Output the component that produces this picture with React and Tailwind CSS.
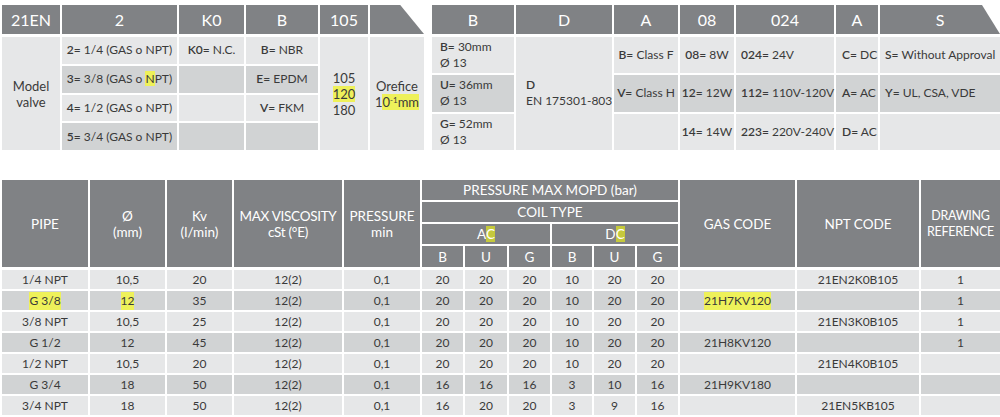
const font = { fontFamily: "Lato, 'Liberation Sans', sans-serif" };

const Hl = ({ children, dark }) => (
  <span className={dark ? "bg-[#c5c93c]" : "bg-[#eef15a]"}>{children}</span>
);

const head = "bg-[#808285] text-white flex items-center justify-center";
const light = "bg-[#e6e7e8]";
const dark = "bg-[#d1d3d4]";

// one cell = one flex box with a single inline child so spaces survive
const Cell = ({ className, k, children }) => (
  <div className={`${className} flex items-center whitespace-nowrap`}>
    <span>
      {k && <b className="font-semibold">{k}</b>}
      {k && " "}
      {children}
    </span>
  </div>
);

const grid1 = "grid-cols-[58px_115px_65px_72px_48px_54px]";

function ModelTable() {
  return (
    <div className="w-[422px] flex flex-col gap-[3px]">
      <div className={`grid ${grid1} gap-[2px] h-[29px] text-[16px]`}>
        <div className={head}>21EN</div>
        <div className={head}>2</div>
        <div className={head}>K0</div>
        <div className={head}>B</div>
        <div className={head}>105</div>
        <div className="bg-[#808285] [clip-path:polygon(0_0,56%_0,100%_100%,0_100%)]" />
      </div>
      <div className={`grid ${grid1} grid-rows-[repeat(4,minmax(0,1fr))] gap-[2px] h-[113px] text-[12px] text-[#3a3a3a]`}>
        <div className={`${light} row-span-4 flex items-center justify-center text-center text-[13px] leading-[16px]`}>
          <span>Model<br />valve</span>
        </div>
        <Cell className={`${light} justify-center`} k="2=">1/4 (GAS o NPT)</Cell>
        <Cell className={`${light} justify-center`} k="K0=">N.C.</Cell>
        <Cell className={`${light} justify-center`} k="B=">NBR</Cell>
        <div className={`${light} row-span-4 flex items-center justify-center text-center text-[13px] leading-[16px]`}>
          <span>105<br /><Hl>120</Hl><br />180</span>
        </div>
        <div className={`${light} row-span-4 flex items-center justify-center text-center text-[13px] leading-[16px]`}>
          <span>Orefice<br />1<Hl>0<sup className="text-[8px]">-1</sup>mm</Hl></span>
        </div>
        <Cell className={`${dark} justify-center`} k="3=">3/8 (GAS o <Hl>N</Hl>PT)</Cell>
        <div className={dark} />
        <Cell className={`${dark} justify-center`} k="E=">EPDM</Cell>
        <Cell className={`${light} justify-center`} k="4=">1/2 (GAS o NPT)</Cell>
        <div className={light} />
        <Cell className={`${light} justify-center`} k="V=">FKM</Cell>
        <Cell className={`${dark} justify-center`} k="5=">3/4 (GAS o NPT)</Cell>
        <div className={dark} />
        <div className={dark} />
      </div>
    </div>
  );
}

const grid2 = "grid-cols-[82px_96px_64px_54px_98px_42px_1fr]";

function CoilTable() {
  return (
    <div className="flex-1 flex flex-col gap-[3px]">
      <div className={`grid ${grid2} gap-[2px] h-[29px] text-[16px]`}>
        <div className={head}>B</div>
        <div className={head}>D</div>
        <div className={head}>A</div>
        <div className={head}>08</div>
        <div className={head}>024</div>
        <div className={head}>A</div>
        <div className={`${head} [clip-path:polygon(0_0,85%_0,100%_100%,0_100%)]`}>S</div>
      </div>
      <div className={`grid ${grid2} grid-rows-[repeat(3,minmax(0,1fr))] gap-[2px] h-[113px] text-[12px] text-[#3a3a3a] leading-[16px]`}>
        <Cell className={`${light} pl-2`} k="B=">30mm<br />Ø 13</Cell>
        <div className={`${light} row-span-3 flex items-center pl-[10px] whitespace-nowrap`}>
          <span><b className="font-semibold">D</b><br />EN 175301-803</span>
        </div>
        <Cell className={`${light} justify-center`} k="B=">Class F</Cell>
        <Cell className={`${light} justify-center`} k="08=">8W</Cell>
        <Cell className={`${light} pl-[5px]`} k="024=">24V</Cell>
        <Cell className={`${light} pl-[6px]`} k="C=">DC</Cell>
        <Cell className={`${light} pl-[5px]`} k="S=">Without Approval</Cell>

        <Cell className={`${dark} pl-2`} k="U=">36mm<br />Ø 13</Cell>
        <Cell className={`${dark} justify-center`} k="V=">Class H</Cell>
        <Cell className={`${dark} justify-center`} k="12=">12W</Cell>
        <Cell className={`${dark} pl-[5px]`} k="112=">110V-120V</Cell>
        <Cell className={`${dark} pl-[6px]`} k="A=">AC</Cell>
        <Cell className={`${dark} pl-[5px]`} k="Y=">UL, CSA, VDE</Cell>

        <Cell className={`${light} pl-2`} k="G=">52mm<br />Ø 13</Cell>
        <div className={light} />
        <Cell className={`${light} justify-center`} k="14=">14W</Cell>
        <Cell className={`${light} pl-[5px]`} k="223=">220V-240V</Cell>
        <Cell className={`${light} pl-[6px]`} k="D=">AC</Cell>
        <div className={light} />
      </div>
    </div>
  );
}

const cols = "grid-cols-[86px_75px_65px_108px_76px_41px_42px_41px_40px_41px_41px_115px_122px_1fr]";

const rows = [
  ["1/4 NPT", "10,5", "20", "12(2)", "0,1", "20", "20", "20", "10", "20", "20", "", "21EN2K0B105", "1"],
  ["G 3/8", "12", "35", "12(2)", "0,1", "20", "20", "20", "10", "20", "20", "21H7KV120", "", "1"],
  ["3/8 NPT", "10,5", "25", "12(2)", "0,1", "20", "20", "20", "10", "20", "20", "", "21EN3K0B105", "1"],
  ["G 1/2", "12", "45", "12(2)", "0,1", "20", "20", "20", "10", "20", "20", "21H8KV120", "", "1"],
  ["1/2 NPT", "10,5", "20", "12(2)", "0,1", "20", "20", "20", "10", "20", "20", "", "21EN4K0B105", ""],
  ["G 3/4", "18", "50", "12(2)", "0,1", "16", "16", "16", "3", "10", "16", "21H9KV180", "", ""],
  ["3/4 NPT", "18", "50", "12(2)", "0,1", "16", "20", "20", "3", "9", "16", "", "21EN5KB105", ""],
];

function SpecTable() {
  return (
    <div className="flex flex-col gap-[3px] ml-[2px]">
      <div className={`grid ${cols} grid-rows-[20px_20px_20px_21px] gap-[2px] text-[13.5px] leading-[16px] text-center`}>
        <div className={`${head} row-span-4`}>PIPE</div>
        <div className={`${head} row-span-4`}><span>Ø<br />(mm)</span></div>
        <div className={`${head} row-span-4`}><span>Kv<br />(l/min)</span></div>
        <div className={`${head} row-span-4 tracking-[-0.3px]`}><span>MAX VISCOSITY<br />cSt (°E)</span></div>
        <div className={`${head} row-span-4`}><span>PRESSURE<br />min</span></div>
        <div className={`${head} col-span-6`}>PRESSURE MAX MOPD (bar)</div>
        <div className={`${head} row-span-4`}>GAS CODE</div>
        <div className={`${head} row-span-4`}>NPT CODE</div>
        <div className={`${head} row-span-4 text-[12.5px] tracking-[-0.3px]`}><span>DRAWING<br />REFERENCE</span></div>
        <div className={`${head} col-span-6`}>COIL TYPE</div>
        <div className={`${head} col-span-3`}><span>A<Hl dark>C</Hl></span></div>
        <div className={`${head} col-span-3`}><span>D<Hl dark>C</Hl></span></div>
        {["B", "U", "G", "B", "U", "G"].map((l, i) => (
          <div key={i} className={head}>{l}</div>
        ))}
      </div>
      <div className={`grid ${cols} auto-rows-[19px] gap-[2px] text-[12px] text-[#3a3a3a]`}>
        {rows.map((r, ri) =>
          r.map((c, ci) => (
            <div key={ri + "-" + ci} className={`${ri % 2 ? dark : light} flex items-center justify-center`}>
              {ri === 1 && (ci === 0 || ci === 1 || ci === 11) ? <Hl>{c}</Hl> : c}
            </div>
          ))
        )}
      </div>
    </div>
  );
}

export default function App() {
  return (
    <div className="w-[1000px] h-[417px] bg-white overflow-hidden" style={font}>
      <div className="flex pt-[5px] pl-[2px] gap-[8px]">
        <ModelTable />
        <CoilTable />
      </div>
      <div className="mt-[30px]">
        <SpecTable />
      </div>
    </div>
  );
}
